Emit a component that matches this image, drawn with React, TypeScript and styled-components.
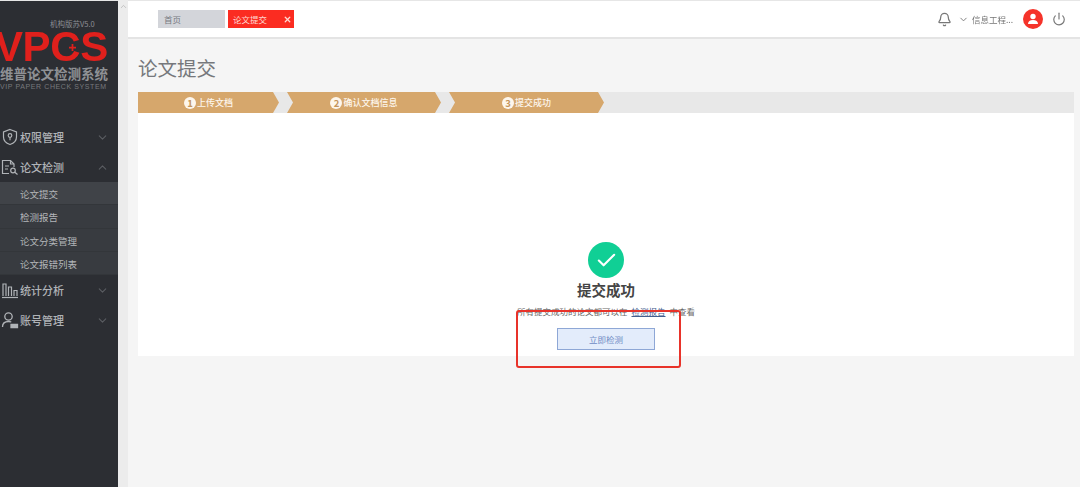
import React from 'react';
import styled, { createGlobalStyle } from 'styled-components';
import { Bell, ChevronDown, ChevronUp, Power, X, Check } from 'lucide-react';

const CJK = '"Noto Sans CJK SC", "Liberation Sans", sans-serif';

const subItems = ['论文提交', '检测报告', '论文分类管理', '论文报错列表'];
const steps = [
  { no: 1, label: '上传文档', width: 141 },
  { no: 2, label: '确认文档信息', width: 154 },
  { no: 3, label: '提交成功', width: 155 },
];

function ShieldIcon() {
  return (
    <svg width="18" height="18" viewBox="0 0 18 18" fill="none" stroke="currentColor" strokeWidth="1.2">
      <path d="M9 1.500 15.500 4v5c0 3.600-2.700 6.200-6.500 7.500C5.200 15.200 2.500 12.600 2.500 9V4z" />
      <circle cx="9" cy="7.500" r="1.800" />
      <path d="M9 9.300v3" />
    </svg>
  );
}

function DocIcon() {
  return (
    <svg width="18" height="18" viewBox="0 0 18 18" fill="none" stroke="currentColor" strokeWidth="1.2">
      <path d="M8 15.500H1.500v-13h8l3.500 3.500v3" />
      <path d="M9.500 2.500V6H13" />
      <path d="M4 8h4M4 11h3" />
      <circle cx="12" cy="12.500" r="2.300" />
      <path d="m13.800 14.300 2.700 2.200" />
    </svg>
  );
}

function ChartIcon() {
  return (
    <svg width="18" height="18" viewBox="0 0 18 18" fill="none" stroke="currentColor" strokeWidth="1.2">
      <path d="M1 16.500h16" />
      <path d="M2 15V3h3v12M7.500 15V6h3v9M13 15V9.500h3V15" />
    </svg>
  );
}

function UserIcon() {
  return (
    <svg width="18" height="18" viewBox="0 0 18 18" fill="none" stroke="currentColor" strokeWidth="1.3">
      <circle cx="7.500" cy="5.500" r="3.700" />
      <path d="M1.500 16c0-3.500 2.500-5.500 6-5.500 1 0 2 .2 2.800.5" />
      <path d="M10 16.500v-3h6.500v3z" fill="currentColor" />
    </svg>
  );
}

function AvatarGlyph() {
  return (
    <svg width="12" height="12" viewBox="0 0 12 12" fill="#fff">
      <circle cx="6" cy="3.500" r="2.700" />
      <path d="M1 11c0-2.600 2-4 5-4s5 1.400 5 4z" />
    </svg>
  );
}

export default function App() {
  return (
    <>
      <GlobalStyle />
      <Page>
        <Sidebar>
          <Logo>
            <Edition>机构版苏V5.0</Edition>
            <Brand>
              VPCS
              <BrandCross viewBox="0 0 8 8">
                <path d="M4 0v8M0 4h8" stroke="#e0201c" strokeWidth="2" />
              </BrandCross>
            </Brand>
            <LogoName>维普论文检测系统</LogoName>
            <LogoEnglish>VIP PAPER CHECK SYSTEM</LogoEnglish>
          </Logo>
          <MenuItem>
            <ShieldIcon />
            <MenuLabel>权限管理</MenuLabel>
            <ChevronDown size={13} />
          </MenuItem>
          <MenuItem>
            <DocIcon />
            <MenuLabel>论文检测</MenuLabel>
            <ChevronUp size={13} />
          </MenuItem>
          <SubMenu>
            {subItems.map((item, i) => (
              <SubItem key={item} $active={i === 0}>
                {item}
              </SubItem>
            ))}
          </SubMenu>
          <MenuItem>
            <ChartIcon />
            <MenuLabel>统计分析</MenuLabel>
            <ChevronDown size={13} />
          </MenuItem>
          <MenuItem>
            <UserIcon />
            <MenuLabel>账号管理</MenuLabel>
            <ChevronDown size={13} />
          </MenuItem>
        </Sidebar>
        <ScrollStrip>
          <ChevronUp size={9} />
        </ScrollStrip>
        <Main>
          <TopBar>
            <Tab>首页</Tab>
            <Tab $active>
              论文提交
              <X size={9} strokeWidth={3.5} />
            </Tab>
            <TopRight>
              <BellIcon size={15} />
              <ChevronDown size={11} />
              <UserName>信息工程...</UserName>
              <Avatar>
                <AvatarGlyph />
              </Avatar>
              <Power size={14} />
            </TopRight>
          </TopBar>
          <Content>
            <Title>论文提交</Title>
            <StepBar>
              {steps.map(step => (
                <Step key={step.no} $first={step.no === 1} style={{ width: step.width }}>
                  <StepNo>{step.no}</StepNo>
                  {step.label}
                </Step>
              ))}
            </StepBar>
            <Card>
              <SuccessIcon>
                <Check size={23} strokeWidth={2.2} />
              </SuccessIcon>
              <SuccessTitle>提交成功</SuccessTitle>
              <SuccessText>
                所有提交成功的论文都可以在<ReportLink>检测报告</ReportLink>中查看
              </SuccessText>
              <DetectButton>立即检测</DetectButton>
              <Annotation />
            </Card>
          </Content>
        </Main>
      </Page>
    </>
  );
}

const GlobalStyle = createGlobalStyle`
  html, body {
    margin: 0;
    height: 100%;
    overflow: hidden;
    background: #f5f5f5;
    font-family: ${CJK};
  }
`;

// the reference is a resampled screenshot, everything in it is slightly soft
const Page = styled.div`
  display: grid;
  grid-template-columns: 118px 10px 1fr;
  height: 487px;
  width: 1080px;
  overflow: hidden;
  filter: blur(0.35px);
`;

const Sidebar = styled.aside`
  background: #2c2e33;
  color: #b0b3b7;
  overflow: hidden;
  border-top: 1px solid #e6e6e6;
`;

const Logo = styled.div`
  height: 121px;
  padding-top: 18px;
  box-sizing: border-box;
  display: flex;
  flex-direction: column;
`;

const Edition = styled.div`
  align-self: flex-start;
  margin-left: 50px;
  font-size: 7.500px;
  line-height: 10px;
  color: #8d8f93;
  white-space: nowrap;
`;

const Brand = styled.div`
  position: relative;
  margin: 0 0 0 -5px;
  font-family: 'Liberation Sans', sans-serif;
  font-weight: 700;
  font-size: 42px;
  line-height: 36px;
  letter-spacing: -0.4px;
  color: #e0201c;
  white-space: nowrap;
`;

const BrandCross = styled.svg`
  position: absolute;
  left: 74px;
  top: 15px;
  width: 7px;
  height: 7px;
`;

const LogoName = styled.div`
  font-size: 13.500px;
  font-weight: 700;
  line-height: 17px;
  color: #8f9195;
  white-space: nowrap;
`;

const LogoEnglish = styled.div`
  font-family: 'Liberation Sans', sans-serif;
  font-size: 7px;
  line-height: 9px;
  letter-spacing: 0.6px;
  color: #77797d;
  white-space: nowrap;
`;

const MenuItem = styled.div`
  display: flex;
  align-items: center;
  height: 30px;
  padding: 0 9px 0 1px;
  gap: 1px;
  font-size: 11px;
  font-weight: 500;
  background: #2c2e33;

  svg:last-child {
    color: #5a5d62;
  }
`;

const MenuLabel = styled.span`
  flex: 1;
`;

const SubMenu = styled.div`
  background: #393c41;
`;

const SubItem = styled.div<{ $active?: boolean }>`
  height: 23.250px;
  line-height: 25px;
  padding-left: 20px;
  font-size: 9.500px;
  color: #b3b6b9;
  background: ${({ $active }) => ($active ? '#404348' : '#383b40')};
  border-bottom: 1px solid #33363a;
  box-sizing: border-box;
`;

const ScrollStrip = styled.div`
  background: #ececec;
  display: flex;
  justify-content: center;
  padding-top: 2px;
  color: #b5b5b5;
`;

const Main = styled.main`
  display: flex;
  flex-direction: column;
  min-width: 0;
`;

const TopBar = styled.header`
  height: 39px;
  box-sizing: border-box;
  display: flex;
  align-items: center;
  gap: 3px;
  padding: 0 14px 0 30px;
  background: #fff;
  border-top: 1px solid #e6e6e6;
  border-bottom: 2px solid #e4e4e4;
`;

const Tab = styled.div<{ $active?: boolean }>`
  width: ${({ $active }) => ($active ? '66px' : '67px')};
  height: 18px;
  box-sizing: border-box;
  display: flex;
  align-items: center;
  justify-content: space-between;
  padding: ${({ $active }) => ($active ? '0 2px 0 5px' : '0 5px 0 6px')};
  font-size: 8.500px;
  color: ${({ $active }) => ($active ? '#ffd9d2' : '#777a80')};
  background: ${({ $active }) => ($active ? '#fb2c21' : '#d3d5da')};
`;

const TopRight = styled.div`
  margin-left: auto;
  display: flex;
  align-items: center;
  color: #777;
  gap: 4px;
`;

const BellIcon = styled(Bell)`
  margin-right: 2px;
`;

const UserName = styled.span`
  font-size: 8.500px;
  width: 44px;
  white-space: nowrap;
  margin-left: -1px;
`;

const Avatar = styled.span`
  width: 20px;
  height: 20px;
  margin: 0 5px 0 3px;
  border-radius: 50%;
  background: #f5332a;
  display: flex;
  align-items: center;
  justify-content: center;
`;

const Content = styled.div`
  flex: 1;
  padding: 0 6px 0 10px;
  background: #f5f5f5;
`;

const Title = styled.h1`
  margin: 0;
  height: 53px;
  padding-top: 15px;
  box-sizing: border-box;
  font-size: 19.500px;
  line-height: 28px;
  font-weight: 400;
  color: #76787c;
`;

const StepBar = styled.div`
  display: flex;
  height: 21px;
  background: #e8e8e8;
`;

const Step = styled.div<{ $first?: boolean }>`
  display: flex;
  align-items: center;
  justify-content: center;
  gap: 1px;
  margin-right: -1px;
  margin-left: ${({ $first }) => ($first ? '0' : '9px')};
  font-size: 9px;
  font-weight: 500;
  color: #fdf6ec;
  background: #d6a76c;
  clip-path: ${({ $first }) =>
    $first
      ? 'polygon(0 0, calc(100% - 6px) 0, 100% 50%, calc(100% - 6px) 100%, 0 100%)'
      : 'polygon(0 0, calc(100% - 6px) 0, 100% 50%, calc(100% - 6px) 100%, 0 100%, 6px 50%)'};
`;

const StepNo = styled.span`
  width: 12px;
  height: 12px;
  border-radius: 50%;
  background: #fdf6ec;
  color: #c4955c;
  font-size: 9.500px;
  font-weight: 700;
  line-height: 12px;
  text-align: center;
`;

const Card = styled.section`
  position: relative;
  height: 243px;
  box-sizing: border-box;
  padding-top: 129px;
  background: #fff;
  display: flex;
  flex-direction: column;
  align-items: center;
`;

const SuccessIcon = styled.div`
  width: 36px;
  height: 36px;
  border-radius: 50%;
  background: #10cf95;
  color: #fff;
  display: flex;
  align-items: center;
  justify-content: center;
`;

const SuccessTitle = styled.h2`
  margin: 1px 0 0;
  font-size: 14.500px;
  line-height: 22px;
  font-weight: 700;
  color: #454545;
`;

const SuccessText = styled.p`
  margin: 3px 0 0;
  font-size: 8.500px;
  line-height: 14px;
  color: #6a6a6a;
  white-space: nowrap;
`;

const ReportLink = styled.a`
  margin: 0 4px;
  color: #44608f;
  text-decoration: underline;
`;

const DetectButton = styled.button`
  margin-top: 10px;
  width: 98px;
  height: 22px;
  padding: 0;
  box-sizing: border-box;
  border: 1px solid #8ea7d6;
  background: #e3ecfb;
  color: #6f8bc4;
  font-family: ${CJK};
  font-size: 8.500px;
`;

const Annotation = styled.div`
  position: absolute;
  left: 378px;
  top: 197px;
  width: 165px;
  height: 58px;
  box-sizing: border-box;
  border: 2px solid #e8332a;
  border-radius: 3px;
`;
